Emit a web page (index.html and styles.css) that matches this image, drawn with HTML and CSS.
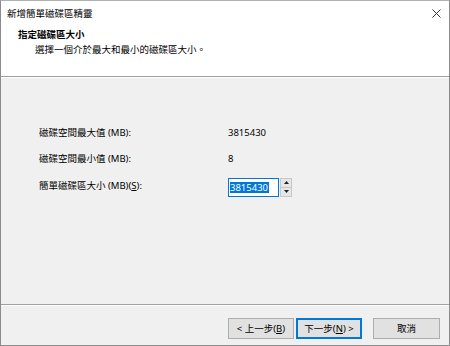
FILE: index.html
```html
<!DOCTYPE html>
<html lang="zh-Hant">
<head>
<meta charset="utf-8">
<link rel="stylesheet" href="styles.css">
</head>
<body>
<div class="window">
  <div class="titlebar">
    <span class="title">新增簡單磁碟區精靈</span>
    <svg class="close" width="9" height="9" viewBox="0 0 9 9"><path d="M0.5 0.5 L8.5 8.5 M8.5 0.5 L0.5 8.5" stroke="#333" stroke-width="1" fill="none"/></svg>
  </div>
  <div class="header">
    <div class="h-title">指定磁碟區大小</div>
    <div class="h-sub">選擇一個介於最大和最小的磁碟區大小。</div>
  </div>
  <div class="sep"></div>
  <div class="content">
    <div class="row r1"><span class="label">磁碟空間最大值 (MB):</span><span class="value">3815430</span></div>
    <div class="row r2"><span class="label">磁碟空間最小值 (MB):</span><span class="value">8</span></div>
    <div class="row r3"><span class="label">簡單磁碟區大小 (MB)(<u>S</u>):</span>
      <div class="spin">
        <div class="input"><span class="sel">3815430</span></div>
        <div class="arrows">
          <div class="ab"><svg width="5" height="3" viewBox="0 0 5 3"><path d="M0 3 L2.5 0 L5 3 Z" fill="#222"/></svg></div>
          <div class="ab"><svg width="5" height="3" viewBox="0 0 5 3"><path d="M0 0 L2.5 3 L5 0 Z" fill="#222"/></svg></div>
        </div>
      </div>
    </div>
  </div>
  <div class="sep"></div>
  <div class="footer">
    <button class="btn b1">&lt; 上一步(<u>B</u>)</button>
    <button class="btn b2 default">下一步(<u>N</u>) &gt;</button>
    <button class="btn b3">取消</button>
  </div>
</div>
</body>
</html>
```
FILE: styles.css
```css
html, body {
  margin: 0;
  padding: 0;
  background: #ffffff;
}
body {
  font-family: "Noto Sans", "Noto Sans CJK TC", sans-serif;
  font-size: 9.5px;
  color: #000;
}
.window {
  width: 450px;
  height: 346px;
  box-sizing: border-box;
  border: 1px solid #8c8c8c;
  border-top-color: #b0b0b0;
  display: flex;
  flex-direction: column;
  background: #f0f0f0;
}
.titlebar {
  height: 25px;
  background: #fff;
  display: flex;
  align-items: center;
  justify-content: space-between;
  padding: 0 8px 0 6px;
  flex: none;
}
.title {
  line-height: 13px;
}
.close {
  display: block;
}
.header {
  height: 50px;
  background: #fff;
  padding: 2px 0 0 17px;
  box-sizing: border-box;
  flex: none;
}
.h-title {
  font-weight: bold;
  line-height: 13px;
}
.h-sub {
  line-height: 13px;
  margin-top: 2px;
  padding-left: 17px;
}
.sep {
  flex: none;
  height: 0;
  border-top: 1px solid #a0a0a0;
  border-bottom: 1px solid #ffffff;
}
.content {
  flex: 1;
  padding: 44px 0 0 38px;
  display: flex;
  flex-direction: column;
}
.row {
  height: 20px;
  display: flex;
  align-items: center;
}
.r2 { margin-top: 6px; }
.r3 { margin-top: 7px; }
.label {
  width: 189px;
  line-height: 13px;
  flex: none;
}
.value {
  line-height: 13px;
}
.spin {
  display: flex;
  height: 19px;
  margin-top: 4px;
}
.input {
  width: 48px;
  height: 17px;
  border: 1px solid #0078d7;
  background: #fff;
  display: flex;
  align-items: center;
  padding-left: 1px;
}
.sel {
  background: #0078d7;
  color: #fff;
  line-height: 11px;
  padding: 0 1px 0 0;
}
.arrows {
  width: 12px;
  height: 19px;
  border: 1px solid #c8c8c8;
  box-sizing: border-box;
  display: flex;
  flex-direction: column;
  background: #e6e6e6;
  margin-left: 1px;
}
.ab {
  flex: 1;
  display: flex;
  align-items: center;
  justify-content: center;
}
.ab:first-child {
  border-bottom: 1px solid #c8c8c8;
}
.ab svg { display: block; }
.footer {
  flex: none;
  height: 39px;
  box-sizing: border-box;
  display: flex;
  align-items: flex-start;
  padding: 12px 0 0 227px;
}
.btn {
  font-family: inherit;
  font-size: 9.5px;
  height: 21px;
  line-height: 13px;
  padding: 0;
  background: #e1e1e1;
  border: 1px solid #adadad;
  color: #000;
  box-sizing: border-box;
}
.b1 { width: 66px; }
.b2 { width: 66px; margin-left: 2px; }
.b3 { width: 67px; margin-left: 11px; }
.default {
  border: 2px solid #0078d7;
}
```
